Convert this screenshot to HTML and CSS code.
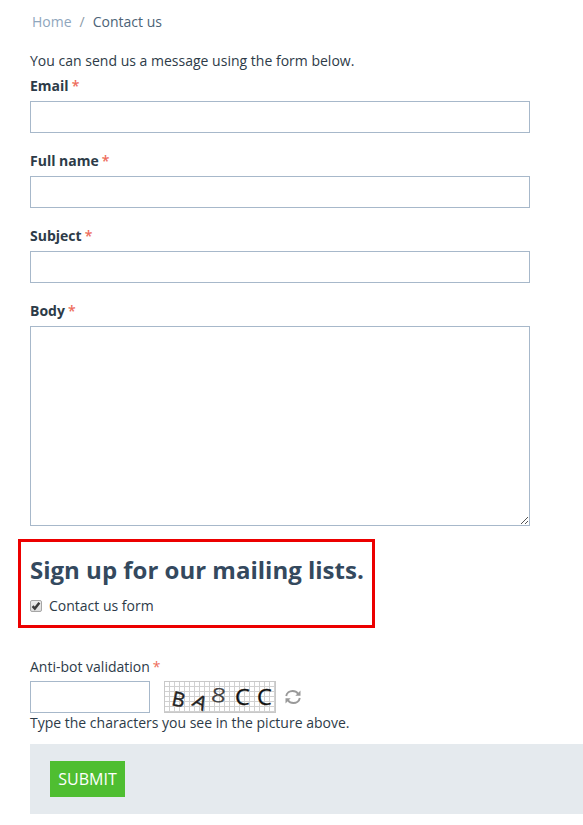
FILE: index.html
```html
<!DOCTYPE html>
<html lang="en">
<head>
<meta charset="utf-8">
<title>Contact us</title>
<link rel="stylesheet" href="styles.css">
</head>
<body>
<nav class="breadcrumbs"><a class="home">Home</a><span class="slash">/</span><span>Contact us</span></nav>
<form class="form">
  <p class="intro">You can send us a message using the form below.</p>
  <div class="field"><label for="email">Email <i>*</i></label><input id="email" type="text"></div>
  <div class="field"><label for="name">Full name <i>*</i></label><input id="name" type="text"></div>
  <div class="field"><label for="subject">Subject <i>*</i></label><input id="subject" type="text"></div>
  <div class="field body-field"><label for="body">Body <i>*</i></label>
    <div class="area"><textarea id="body"></textarea>
      <svg class="grip" width="8" height="8" viewBox="0 0 8 8" shape-rendering="crispEdges"><path d="M0 7h1v1H0zM1 6h1v1H1zM2 5h1v1H2zM3 4h1v1H3zM4 3h1v1H4zM5 2h1v1H5zM6 1h1v1H6zM4 7h1v1H4zM5 6h1v1H5zM6 5h1v1H6z" fill="#555"/></svg>
    </div>
  </div>
  <section class="signup">
    <h2>Sign up for our mailing lists.</h2>
    <label class="check">
      <svg width="12" height="12" viewBox="0 0 12 12"><defs><linearGradient id="g" x2="0" y2="1"><stop stop-color="#eee"/><stop offset="1" stop-color="#dcdcdc"/></linearGradient></defs><rect x=".5" y=".5" width="11" height="11" rx="1.5" fill="url(#g)" stroke="#a6a6a6"/><path d="M2.6 6.2 4.8 8.5 9.4 2.8" fill="none" stroke="#3c3c3c" stroke-width="2.5"/></svg>
      <span>Contact us form</span>
    </label>
  </section>
  <div class="antibot">
    <label for="code">Anti-bot validation <i>*</i></label>
    <div class="code-row">
      <input id="code" type="text">
      <div class="captcha"><b class="c1">B</b><b class="c2">A</b><b class="c3">8</b><b class="c4">C</b><b class="c5">C</b></div>
      <svg class="refresh" width="16" height="16" viewBox="0 0 16 16" fill="none" stroke="#999" stroke-width="1.9"><path d="M1.2 7C1.7 4 4.6 2 7.6 2c2.4 0 4.3 1.1 5.5 2.8M14.8 9c-.5 3-3.4 5-6.4 5-2.4 0-4.3-1.1-5.5-2.8"/><path d="M15.5 1.5v5.2h-5.2zM.5 14.5V9.3h5.2z" fill="#999" stroke="none"/></svg>
    </div>
    <p>Type the characters you see in the picture above.</p>
  </div>
  <div class="actions"><button type="button">SUBMIT</button></div>
</form>
</body>
</html>
```
FILE: styles.css
```css
* { box-sizing: border-box; }
body { margin: 0; padding-top: 12px; background: #fff; color: #2d3b48; font: 14px/20px "Open Sans", sans-serif; overflow: hidden; }
p, h2 { margin: 0; }
.breadcrumbs { display: flex; margin-left: 32px; color: #4c6377; }
.home { color: #8fa6bd; }
.slash { margin: 0 8px; color: #8b9aa8; }
.form { margin: 19px 0 0 30px; }
.intro { margin-bottom: 5px; letter-spacing: .01px; }
.field { height: 75px; width: 500px; }
.field label { display: block; font-weight: 700; margin-bottom: 5px; }
i { color: #ee6c5b; font-style: normal; font-weight: 400; }
.field i { font-weight: 600; margin-left: -.6px; }
input, textarea { display: block; margin: 0; padding: 4px 8px; width: 100%; height: 32px; border: 1px solid #a7b8ca; border-radius: 0; background: #fff; font: inherit; outline: none; }
.body-field { height: 225px; }
.area { position: relative; }
textarea { height: 200px; resize: none; }
.grip { position: absolute; right: 1px; bottom: 2px; }
.signup { width: 357px; height: 89px; margin: 13px 0 0 -12px; padding: 13px 0 0 9px; border: 3px solid #ec0000; }
.signup h2 { color: #34495e; font-size: 24px; line-height: 30px; white-space: nowrap; }
.check { display: flex; align-items: center; gap: 7px; margin-top: 11px; }
.antibot { margin-top: 29px; }
.antibot label { display: block; margin-bottom: 4px; }
.antibot i { margin-left: -.6px; }
.code-row { display: flex; align-items: center; }
.code-row input { width: 120px; }
.captcha { display: flex; width: 112px; height: 32px; margin-left: 14px; padding-left: 3px; border: 1px solid #c8c8c8; background: repeating-linear-gradient(90deg, transparent 0 4px, #d1d1d1 4px 5px), repeating-linear-gradient(transparent 0 4px, #d1d1d1 4px 5px); }
.captcha b { width: 21px; flex: none; color: #222; text-align: center; font: 400 19px/30px "Open Sans", sans-serif; }
.captcha .c1 { transform: translate(0, 2.5px) rotate(12deg); font-size: 20px; }
.captcha .c2 { transform: translate(1px, 5px) rotate(28deg) scaleX(1.1); font-size: 19px; }
.captcha .c3 { transform: translate(-2px, -1.5px) scaleX(1.3) rotate(6deg); color: #444; font-size: 20px; }
.captcha .c4, .captcha .c5 { color: #111; font-size: 21px; -webkit-text-stroke: .3px #111; }
.captcha .c1, .captcha .c2 { -webkit-text-stroke: .4px #222; }
.captcha .c4 { transform: translate(1px, -.5px) scaleX(1.12); }
.captcha .c5 { transform: translate(2px, -.5px) scaleX(1.12); }
.refresh { margin-left: 9px; }
.actions { height: 70px; margin-top: 11px; padding: 17px 20px; background: #e5eaee; }
button { display: block; width: 75px; height: 36px; padding: 0; border: 0; background: #4fbe31; color: #fff; font: 16px/36px "Open Sans", sans-serif; }
```
